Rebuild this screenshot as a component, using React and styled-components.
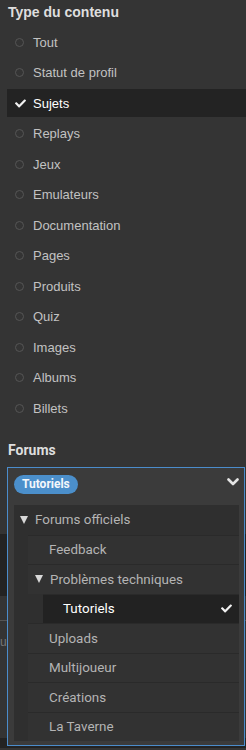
import React from 'react'
import styled, { createGlobalStyle } from 'styled-components'
import { FaCheck } from 'react-icons/fa'

const GlobalStyle = createGlobalStyle`
  html, body {
    margin: 0;
    padding: 0;
    background: #343434;
    font-family: "Liberation Sans", Arial, sans-serif;
  }
`

const types = [
  'Tout', 'Statut de profil', 'Sujets', 'Replays', 'Jeux', 'Emulateurs',
  'Documentation', 'Pages', 'Produits', 'Quiz', 'Images', 'Albums', 'Billets'
]

const Check = ({ size = 10 }) => <FaCheck size={size} />

const App = () => {
  return (
    <Page>
      <GlobalStyle />
      <Title>Type du contenu</Title>
      <TypeList>
        {types.map((t) => (
          <TypeRow key={t} selected={t === 'Sujets'}>
            <Mark>{t === 'Sujets' ? <Check size={11} /> : <Radio />}</Mark>
            {t}
          </TypeRow>
        ))}
      </TypeList>

      <ForumsTitle>Forums</ForumsTitle>
      <SelectArea>
        <Control>
          <Tag>Tutoriels</Tag>
          <Chevron viewBox="0 0 12 8">
            <path d="M1.5 1.5 L6 6 L10.5 1.5" />
          </Chevron>
        </Control>
        <Menu>
          <Tree>
            <TreeRow>
              <Arrow />Forums officiels
            </TreeRow>
            <Children>
              <TreeRow child>Feedback</TreeRow>
              <TreeRow child parent>
                <Arrow />Problèmes techniques
              </TreeRow>
              <Children nested>
                <TreeRow leaf selected>
                  Tutoriels
                  <RowCheck><Check size={11} /></RowCheck>
                </TreeRow>
              </Children>
              <TreeRow child>Uploads</TreeRow>
              <TreeRow child>Multijoueur</TreeRow>
              <TreeRow child>Créations</TreeRow>
              <TreeRow child>La Taverne</TreeRow>
            </Children>
          </Tree>
        </Menu>

        <Underlay>
          <DarkField />
          <Rule />
          <UnderText>un</UnderText>
          <Spacer />
          <Footer />
        </Underlay>
      </SelectArea>
    </Page>
  )
}

const Page = styled.div`
  width: 246px;
  height: 750px;
  overflow: hidden;
`

const Title = styled.div`
  padding: 4px 0 0 8px;
  height: 24px;
  line-height: 17px;
  font-size: 14px;
  font-weight: bold;
  color: #dedede;
`

const TypeList = styled.div`
  display: flex;
  flex-direction: column;
  gap: 2.5px;
`

const TypeRow = styled.div`
  display: flex;
  align-items: center;
  height: 28px;
  margin-left: 7px;
  padding-left: 8px;
  font-size: 13px;
  color: ${(p) => (p.selected ? '#ffffff' : '#c2c2c2')};
  background: ${(p) => (p.selected ? '#232323' : 'transparent')};
`

const Mark = styled.span`
  width: 18px;
  display: flex;
  align-items: center;
  color: #f2f2f2;
`

const Radio = styled.span`
  width: 7px;
  height: 7px;
  border-radius: 50%;
  border: 1.6px solid #555555;
`

const ForumsTitle = styled.div`
  margin-top: 20px;
  padding-left: 8px;
  height: 25px;
  line-height: 17px;
  font-family: Roboto, "Liberation Sans", sans-serif;
  font-size: 14px;
  font-weight: bold;
  color: #dedede;
`

const SelectArea = styled.div`
  position: relative;
`

const Control = styled.div`
  margin: 0 1px 0 7px;
  height: 38px;
  box-sizing: border-box;
  display: flex;
  align-items: flex-start;
  justify-content: space-between;
  padding: 7px 5px 0 6px;
  background: #3b3b3b;
  border: 1px solid #4b8ccb;
  border-bottom: none;
`

const Tag = styled.span`
  height: 19px;
  line-height: 19px;
  padding: 0 8px;
  border-radius: 10px;
  background: #4b8fcb;
  color: #f3f7fb;
  font-family: Roboto, "Liberation Sans", sans-serif;
  font-size: 12px;
  font-weight: bold;
`

const Chevron = styled.svg`
  width: 12px;
  height: 8px;
  margin-top: 3px;
  fill: none;
  stroke: #e4e4e4;
  stroke-width: 2.6;
  stroke-linecap: round;
  stroke-linejoin: round;
`

const Menu = styled.div`
  position: absolute;
  z-index: 2;
  top: 38px;
  left: 7px;
  right: 1px;
  padding: 0 5px 4px 6px;
  background: #3b3b3b;
  border: 1px solid #4b8ccb;
  border-top: none;
`

const Tree = styled.div`
  background: #2f2f2f;
  font-family: Roboto, "Liberation Sans", sans-serif;
  font-size: 13.4px;
`

const TreeRow = styled.div`
  display: flex;
  align-items: center;
  height: 29.5px;
  box-sizing: border-box;
  padding-left: ${(p) => (p.leaf ? '20px' : p.parent ? '7px' : p.child ? '21px' : '6px')};
  color: ${(p) => (p.selected ? '#ffffff' : '#b4b4b4')};
  background: ${(p) => (p.selected ? '#222222' : p.child ? '#323232' : '#2f2f2f')};
  border-top: ${(p) => (p.child || p.leaf ? '1px solid #2a2a2a' : 'none')};
`

const Arrow = styled.span`
  width: 0;
  height: 0;
  margin-right: 7px;
  border-left: 4.5px solid transparent;
  border-right: 4.5px solid transparent;
  border-top: 8px solid #d8d8d8;
`

const Children = styled.div`
  margin-left: ${(p) => (p.nested ? '15px' : '14px')};
`

const RowCheck = styled.span`
  margin-left: auto;
  margin-right: 7px;
  display: flex;
  color: #f2f2f2;
`

const Underlay = styled.div`
  display: flex;
  flex-direction: column;
`

const DarkField = styled.div`
  margin-top: 29px;
  height: 62px;
  background: #232323;
`

const Rule = styled.div`
  margin-top: 24px;
  height: 1px;
  background: #555555;
`

const UnderText = styled.div`
  margin-top: 14px;
  font-size: 12px;
  color: #777;
  height: 14px;
  line-height: 14px;
`

const Spacer = styled.div`
  height: 89px;
`

const Footer = styled.div`
  height: 10px;
  background: #232323;
`

export default App
